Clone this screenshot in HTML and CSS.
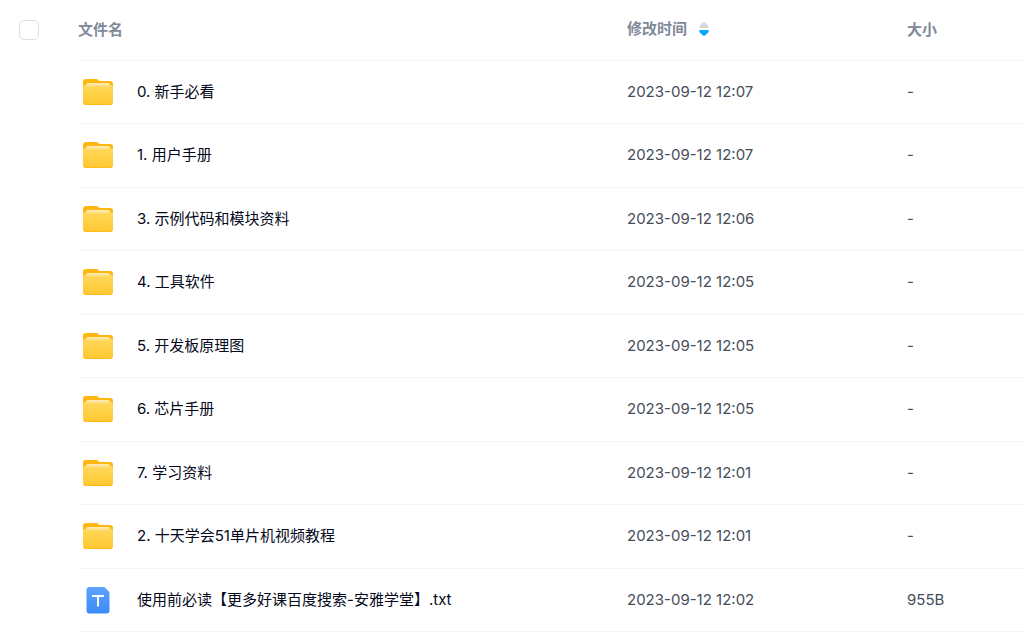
FILE: index.html
```html
<!DOCTYPE html>
<html lang="zh-CN">
<head>
    <meta charset="UTF-8">
    <link rel="stylesheet" href="styles.css">
    <title>文件列表</title>
</head>
<body>
    <!-- 图标 -->
    <svg class="defs" width="0" height="0" aria-hidden="true">
        <defs>
            <linearGradient id="folder-front" x1="0" y1="0" x2="0" y2="1">
                <stop offset="0" stop-color="#ffd95a"/>
                <stop offset="1" stop-color="#ffc730"/>
            </linearGradient>
            <linearGradient id="folder-paper" x1="0" y1="0" x2="0" y2="1">
                <stop offset="0" stop-color="#ffedb8"/>
                <stop offset="1" stop-color="#ffdc78"/>
            </linearGradient>
            <linearGradient id="file-bg" x1="0" y1="0" x2="0" y2="1">
                <stop offset="0" stop-color="#5ea2ff"/>
                <stop offset="1" stop-color="#3b8bf9"/>
            </linearGradient>
            <symbol id="folder" viewBox="0 0 36 36">
                <path d="M3 8a3 3 0 0 1 3-3h10.500c1.500 0 2.200 2 3.500 2H30a3 3 0 0 1 3 3v8H3z" fill="#ffb70f"/>
                <path d="M3 13a2 2 0 0 1 2-2h26a2 2 0 0 1 2 2v15a3 3 0 0 1-3 3H6a3 3 0 0 1-3-3z" fill="url(#folder-front)"/>
                <path d="M6 11a2 2 0 0 1 2-2h20a2 2 0 0 1 2 2v1.500H6z" fill="url(#folder-paper)"/>
                <path d="M3.300 29a3 3 0 0 0 2.700 2h24a3 3 0 0 0 2.700-2 3 3 0 0 1-2.700 1.200H6A3 3 0 0 1 3.300 29z" fill="#ffb70f"/>
            </symbol>
            <symbol id="txt" viewBox="0 0 36 36">
                <path d="M6.500 8a3 3 0 0 1 3-3H23.500a2 2 0 0 1 1.400.6l4 4a2 2 0 0 1 .6 1.400v17.500a3 3 0 0 1-3 3H9.500a3 3 0 0 1-3-3z" fill="url(#file-bg)"/>
                <path d="M12 13h12v2h-5v9.500h-2V15h-5z" fill="#fff"/>
            </symbol>
        </defs>
    </svg>

    <table class="list">
        <thead>
            <tr>
                <th class="col-check"><input type="checkbox" class="check" aria-label="全选"></th>
                <th class="col-name">文件名</th>
                <th class="col-time">
                    <button type="button" class="sort">修改时间
                        <svg class="arrows" width="10" height="14" viewBox="0 0 10 14" aria-hidden="true">
                            <path d="M1 6Q0 6 .3 4.800C1 3 2.500 2 3.600.8Q5 -.4 6.400.8C7.500 2 9 3 9.700 4.800Q10 6 9 6z" fill="#d4d7de"/>
                            <path d="M1 8Q0 8 .3 9.200C1 11 2.500 12 3.600 13.200Q5 14.400 6.400 13.200C7.500 12 9 11 9.700 9.200Q10 8 9 8z" fill="#06a7ff"/>
                        </svg>
                    </button>
                </th>
                <th class="col-size">大小</th>
            </tr>
        </thead>
        <tbody>
            <tr>
                <td class="col-check"></td>
                <td><div class="file"><svg class="icon"><use href="#folder"/></svg><a href="#">0. 新手必看</a></div></td>
                <td>2023-09-12 12:07</td>
                <td>-</td>
            </tr>
            <tr>
                <td class="col-check"></td>
                <td><div class="file"><svg class="icon"><use href="#folder"/></svg><a href="#">1. 用户手册</a></div></td>
                <td>2023-09-12 12:07</td>
                <td>-</td>
            </tr>
            <tr>
                <td class="col-check"></td>
                <td><div class="file"><svg class="icon"><use href="#folder"/></svg><a href="#">3. 示例代码和模块资料</a></div></td>
                <td>2023-09-12 12:06</td>
                <td>-</td>
            </tr>
            <tr>
                <td class="col-check"></td>
                <td><div class="file"><svg class="icon"><use href="#folder"/></svg><a href="#">4. 工具软件</a></div></td>
                <td>2023-09-12 12:05</td>
                <td>-</td>
            </tr>
            <tr>
                <td class="col-check"></td>
                <td><div class="file"><svg class="icon"><use href="#folder"/></svg><a href="#">5. 开发板原理图</a></div></td>
                <td>2023-09-12 12:05</td>
                <td>-</td>
            </tr>
            <tr>
                <td class="col-check"></td>
                <td><div class="file"><svg class="icon"><use href="#folder"/></svg><a href="#">6. 芯片手册</a></div></td>
                <td>2023-09-12 12:05</td>
                <td>-</td>
            </tr>
            <tr>
                <td class="col-check"></td>
                <td><div class="file"><svg class="icon"><use href="#folder"/></svg><a href="#">7. 学习资料</a></div></td>
                <td>2023-09-12 12:01</td>
                <td>-</td>
            </tr>
            <tr>
                <td class="col-check"></td>
                <td><div class="file"><svg class="icon"><use href="#folder"/></svg><a href="#">2. 十天学会51单片机视频教程</a></div></td>
                <td>2023-09-12 12:01</td>
                <td>-</td>
            </tr>
            <tr>
                <td class="col-check"></td>
                <td><div class="file"><svg class="icon"><use href="#txt"/></svg><a href="#">使用前必读【更多好课百度搜索-安雅学堂】.txt</a></div></td>
                <td>2023-09-12 12:02</td>
                <td>955B</td>
            </tr>
        </tbody>
    </table>
</body>
</html>
```

FILE: styles.css
```css
body{
    margin: 0;
    background: #fff;
    font-family: Inter, "Noto Sans CJK SC", sans-serif;
    font-size: 15px;
    line-height: 20px;
    color: #454d5a;
}
.defs{
    position: absolute;
}
.list{
    width: 100%;
    table-layout: fixed;
    border-collapse: separate;
    border-spacing: 0;
}
.list th,
.list td{
    box-sizing: border-box;
    height: 63px;
    padding: 0;
    border-bottom: 1px solid #f5f6f8;
    text-align: left;
    vertical-align: middle;
}
.list tbody tr:nth-child(even) td{
    height: 64px;
    padding-bottom: 2px;
}
.list th{
    height: 61px;
    font-weight: 600;
    color: #818999;
}
.list .col-check{
    width: 78px;
    border-bottom: 0;
}
.col-time{
    width: 280px;
}
.col-size{
    width: 118px;
}
.check{
    display: block;
    appearance: none;
    box-sizing: border-box;
    width: 20px;
    height: 20px;
    margin: 0 0 1px 19px;
    border: 1px solid #dcdde6;
    border-radius: 5px;
    background: #fff;
}
.check:checked{
    border-color: #06a7ff;
    background: #06a7ff;
}
.sort{
    display: flex;
    align-items: center;
    gap: 12px;
    padding: 0 0 3px;
    border: 0;
    background: none;
    font: inherit;
    color: inherit;
    cursor: pointer;
}
.file{
    display: flex;
    align-items: center;
    gap: 21px;
    padding-left: 2px;
}
.icon{
    flex: none;
    width: 36px;
    height: 36px;
}
.file a{
    color: #03081a;
    text-decoration: none;
}
.file a:hover{
    color: #06a7ff;
}
```
